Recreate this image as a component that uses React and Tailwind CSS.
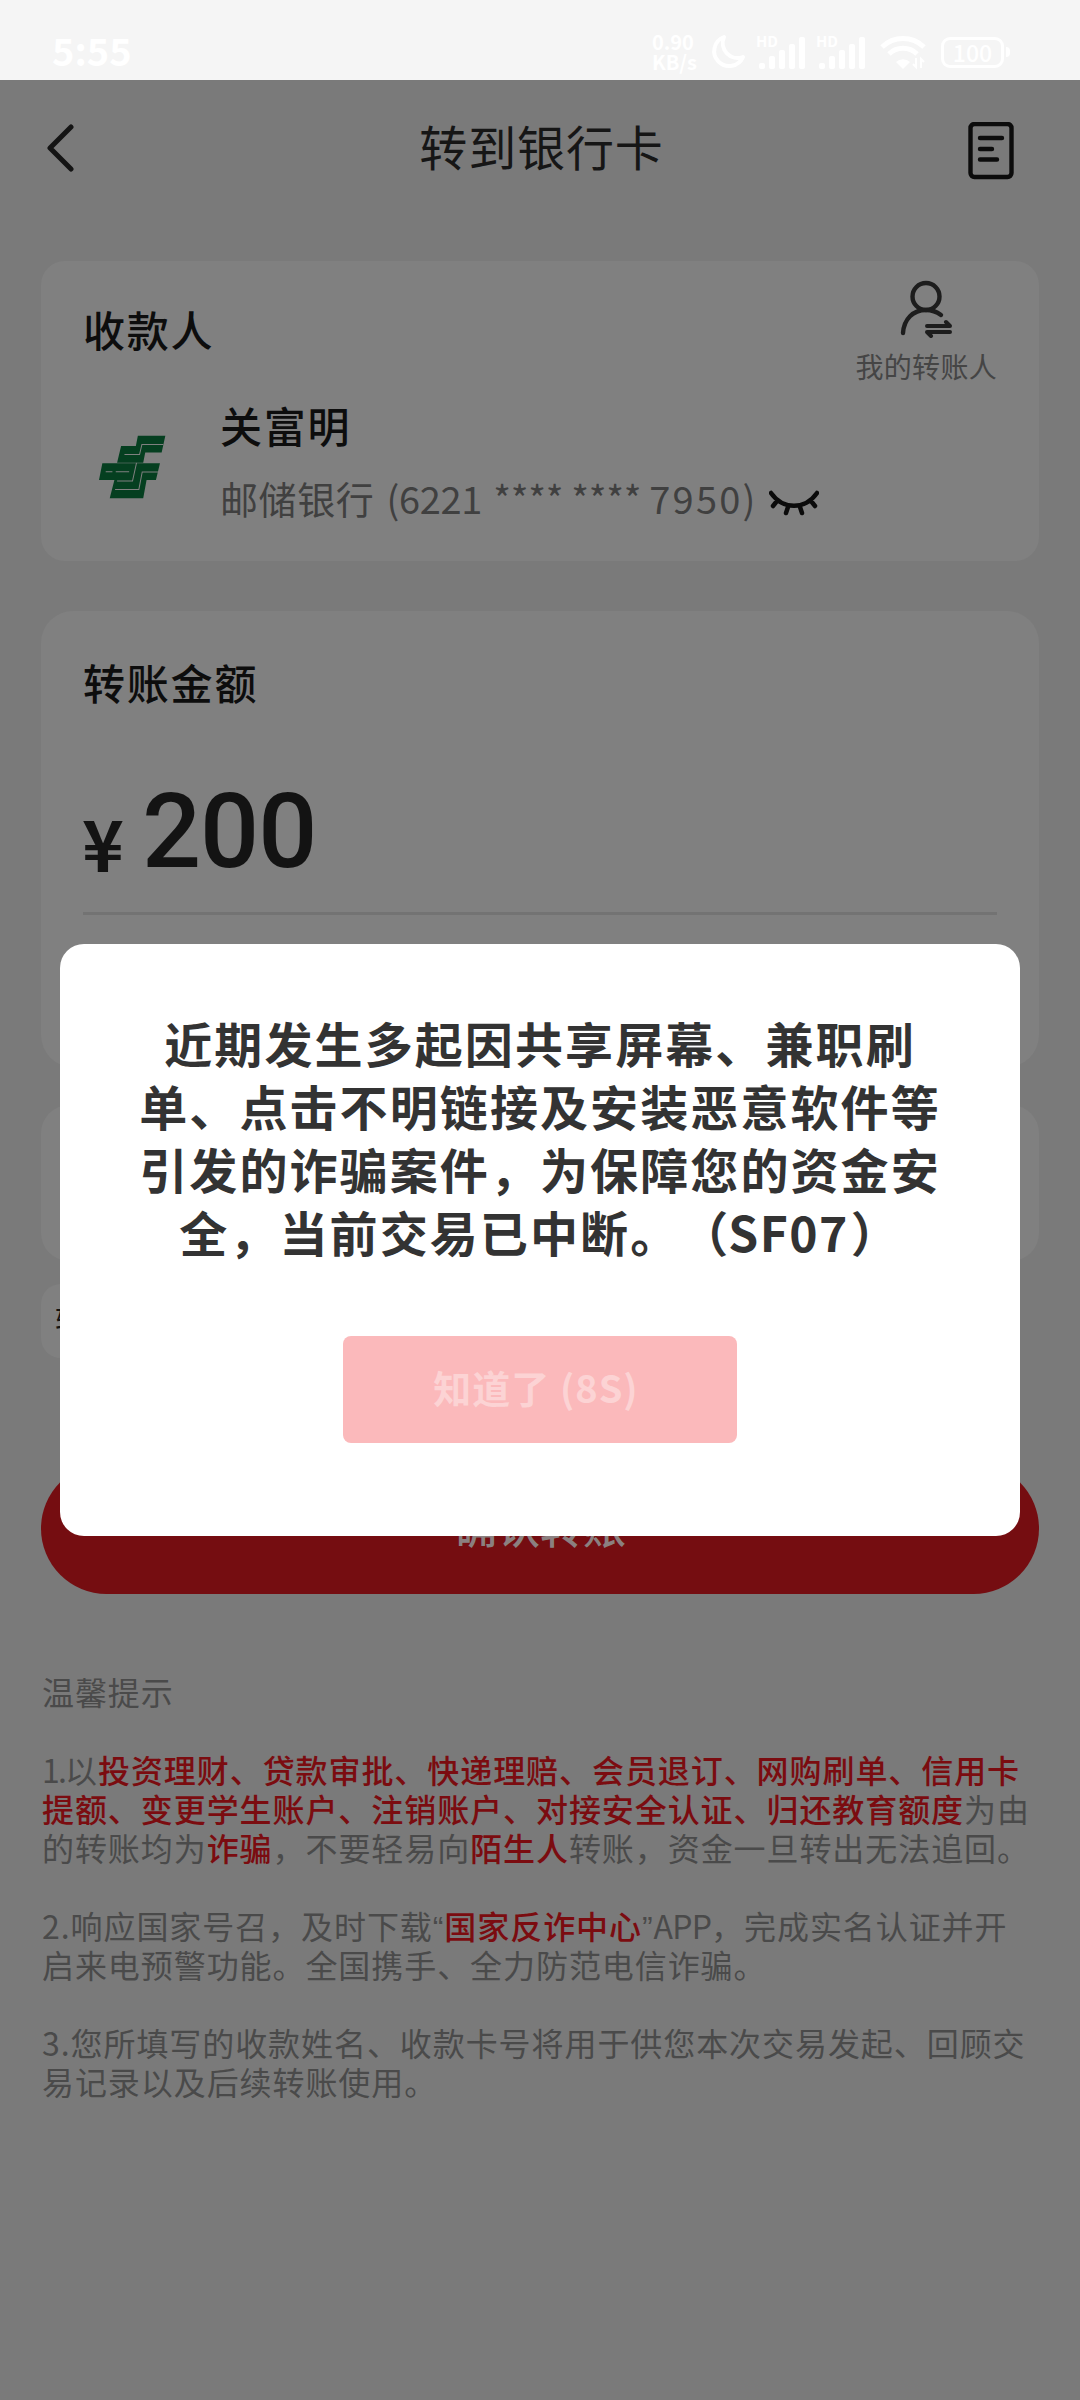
import React from "react";

const Red = ({ children }) => (
  <b className="font-medium text-[#7b0c10]">{children}</b>
);

const Quote = ({ children }) => (
  <span className="font-['Liberation_Sans'] leading-none">{children}</span>
);

const SignalBars = () => (
  <div className="relative w-[48px] h-[36px] text-white">
    <span className="absolute left-[-2px] top-0 text-[15px] leading-[14px] font-semibold">HD</span>
    <svg viewBox="0 0 48 36" className="w-[48px] h-[36px] fill-white">
      <rect x="1" y="29" width="6" height="6" rx="2" />
      <rect x="11" y="22" width="6" height="13" rx="2" />
      <rect x="21" y="16" width="6" height="19" rx="2" />
      <rect x="31" y="10" width="6" height="25" rx="2" />
      <rect x="41" y="3" width="6" height="32" rx="2" />
    </svg>
  </div>
);

const StatusBar = () => (
  <div className="h-[80px] bg-[#f5f5f5] text-white flex items-start justify-between pl-[52px] pr-[70px] pt-[32px]">
    <span className="text-[38px] leading-[36px] font-semibold">5:55</span>
    <div className="flex items-center">
      <div className="w-[48px] text-[20px] leading-[20px] font-bold">
        <div>0.90</div>
        <div>KB/s</div>
      </div>
      <svg viewBox="0 0 36 36" className="w-[36px] h-[36px] ml-[10px]" fill="none" stroke="white" strokeWidth="4" strokeLinejoin="round">
        <path d="M14 3A15 15 0 1 0 33 23A15 15 0 0 1 14 3Z" />
      </svg>
      <div className="ml-[12px] flex gap-[12px]">
        <SignalBars />
        <SignalBars />
      </div>
      <svg viewBox="0 0 46 36" className="w-[46px] h-[36px] ml-[14px]" fill="none" stroke="white" strokeWidth="5">
        <path d="M2 13A30 30 0 0 1 44 13" />
        <path d="M9 20A20 20 0 0 1 37 20" />
        <path d="M23 35L16 28A10 10 0 0 1 30 28Z" fill="white" stroke="none" />
        <path d="M36 24V33L33 30M41 34V25L44 28" strokeWidth="2" />
      </svg>
      <div className="ml-[15px] w-[63px] h-[31px] rounded-[9px] border-[3px] border-white flex items-center justify-center text-[23px] leading-none font-medium">
        100
      </div>
      <div className="ml-[2px] w-[4px] h-[10px] rounded-r bg-white" />
    </div>
  </div>
);

const Header = () => (
  <header className="h-[181px] pt-[42px] pl-[46px] pr-[66px] flex items-start justify-between">
    <svg viewBox="0 0 28 50" className="w-[28px] h-[50px] mt-[1px]" fill="none" stroke="#141414" strokeWidth="5" strokeLinecap="round" strokeLinejoin="round">
      <path d="M25 4L4 25L25 46" />
    </svg>
    <h1 className="text-[48px] leading-[48px] tracking-[0.9px] mt-[-1px] ml-[41px] text-[#161616]">
      转到银行卡
    </h1>
    <svg viewBox="0 0 46 58" className="w-[46px] h-[58px]" fill="none" stroke="#0c0c0c" strokeWidth="4.4" strokeLinecap="round">
      <rect x="2.5" y="2" width="41" height="53" rx="4" />
      <path d="M12 16H34M12 27H24M12 37.5H29" />
    </svg>
  </header>
);

// the light lines are cut out of the two green blocks
const BankLogo = () => (
  <svg viewBox="26 46 200 190" className="w-[67px] h-[64px] mt-[35px] ml-[16px]">
    <path fill="#053f20" d="M142 48H224L213 98H164L158 128H80L92 78H136Z" />
    <path fill="#053f20" d="M36 130H208L196 180H168L158 234H58L72 180H26Z" />
    <path
      fill="none"
      stroke="#808080"
      strokeWidth="3"
      d="M102 104H147L154 74H218M46 155H66M76 155H116M80 183H126L138 129M74 208H145L155 156H202"
    />
  </svg>
);

const PayeeCard = () => (
  <section className="h-[300px] rounded-[24px] bg-[#808080] px-[42px] pt-[17px]">
    <div className="flex justify-between">
      <h2 className="mt-[26px] text-[42px] leading-[50px] tracking-[1.8px] font-medium text-[#0d0d0d]">
        收款人
      </h2>
      <div className="flex flex-col items-center">
        <svg viewBox="0 0 54 60" className="w-[54px] h-[60px]" fill="none" stroke="#1d1d1d" strokeWidth="4.4" strokeLinecap="round">
          <circle cx="27" cy="18.5" r="13.5" />
          <path d="M4 55C5 41 14 32 27 32C33 32 38 34 42 37" />
          <path d="M28 48H51L47 44M51 54H28L32 58" strokeLinejoin="round" strokeWidth="4" />
        </svg>
        <span className="mt-[11px] text-[28px] leading-[34px] tracking-[0.3px] text-[#454545]">
          我的转账人
        </span>
      </div>
    </div>
    <div className="flex mt-[17px]">
      <BankLogo />
      <div className="ml-[54px]">
        <div className="text-[42px] leading-[50px] tracking-[1.8px] font-medium text-[#0d0d0d]">
          关富明
        </div>
        <div className="flex items-center mt-[21px] text-[38px] leading-[54px] text-[#404040] whitespace-pre">
          <span className="tracking-[0.6px]">邮储银行</span>
          <span className="ml-[12px] tracking-[-0.3px]">(6221 </span>
          <span className="ml-[3px] tracking-[-0.3px]">**** **** </span>
          <span className="tracking-[2.2px]">7950)</span>
          <svg viewBox="0 0 50 26" className="w-[50px] h-[26px] mt-[9px] ml-[11px]" fill="none" stroke="#0b0b0b" strokeWidth="4.5" strokeLinecap="round">
            <path d="M2 3C14 20 36 20 48 3M8 11L4 16M19 17L17 23M31 17L33 23M42 11L46 16" />
          </svg>
        </div>
      </div>
    </div>
  </section>
);

const AmountCard = () => (
  <section className="mt-[50px] h-[456px] rounded-[32px] bg-[#808080] px-[42px] pt-[46px]">
    <h2 className="text-[42px] leading-[50px] tracking-[1.8px] font-medium text-[#0d0d0d]">
      转账金额
    </h2>
    <div className="mt-[60px] h-[148px] border-b-[3px] border-[#737373] flex items-start text-[#131313]">
      <span className="w-[60px] mt-[38px] ml-[-1px] text-[71px] leading-[72px] font-semibold">¥</span>
      <span className="font-['Roboto'] text-[104px] leading-[104px] font-medium tracking-[-1px] mt-[13px]">200</span>
    </div>
  </section>
);

const Tips = () => (
  <div className="mt-[78px] pl-[1px] text-[32px] leading-[39px] tracking-[0.93px] text-[#4a4a4a] whitespace-nowrap">
    <p>温馨提示</p>
    <p className="mt-[39px]">
      <span className="tracking-[-1.8px]">1.</span>以<Red>投资理财、贷款审批、快递理赔、会员退订、网购刷单、信用卡</Red>
      <br />
      <Red>提额、变更学生账户、注销账户、对接安全认证、归还教育额度</Red>为由
      <br />
      的转账均为<Red>诈骗</Red>，不要轻易向<Red>陌生人</Red>转账，资金一旦转出无法追回。
    </p>
    <p className="mt-[39px]">
      2.响应国家号召，及时下载<Quote>“</Quote><Red>国家反诈中心</Red><Quote>”</Quote>
      <span className="tracking-[-0.8px]">APP</span>，完成实名认证并开
      <br />
      启来电预警功能。全国携手、全力防范电信诈骗。
    </p>
    <p className="mt-[39px]">
      3.您所填写的收款姓名、收款卡号将用于供您本次交易发起、回顾交
      <br />
      易记录以及后续转账使用。
    </p>
  </div>
);

const NoticeDialog = () => (
  <div className="absolute left-[60px] top-[944px] w-[960px] h-[592px] rounded-[24px] bg-white flex flex-col items-center pt-[67px]">
    <p className="text-center text-[48px] leading-[63px] tracking-[2.1px] font-semibold text-[#333333] whitespace-nowrap [text-spacing-trim:space-all]">
      近期发生多起因共享屏幕、兼职刷
      <br />
      单、点击不明链接及安装恶意软件等
      <br />
      引发的诈骗案件，为保障您的资金安
      <br />
      全，当前交易已中断。（<span className="ml-[-2px] mr-[2px] tracking-[1.4px]">SF07</span>）
    </p>
    <button className="mt-[73px] pr-[8px] pb-[6px] w-[394px] h-[107px] rounded-[8px] bg-[#fbb9bb] text-[#fcd3d4] text-[38px] tracking-[1px] font-semibold">
      知道了 (8S)
    </button>
  </div>
);

const App = () => {
  return (
    <div className="relative w-[1080px] h-[2400px] overflow-hidden bg-[#7a7a7a] font-['Noto_Sans_CJK_SC',sans-serif]">
      <StatusBar />
      <Header />
      <main className="px-[41px]">
        <PayeeCard />
        <AmountCard />
        <section className="mt-[38px] h-[156px] rounded-[28px] bg-[#808080]" />
        <section className="mt-[23px] w-[300px] h-[74px] rounded-[20px] bg-[#808080] px-[14px] text-[30px] leading-[68px] text-[#131313]">
          转账附言
        </section>
        <button className="mt-[105px] pb-[6px] w-full h-[131px] rounded-full bg-[#750d11] text-[#8b8080] text-[43px] font-medium">
          确认转账
        </button>
        <Tips />
      </main>
      <NoticeDialog />
    </div>
  );
};

export default App;
